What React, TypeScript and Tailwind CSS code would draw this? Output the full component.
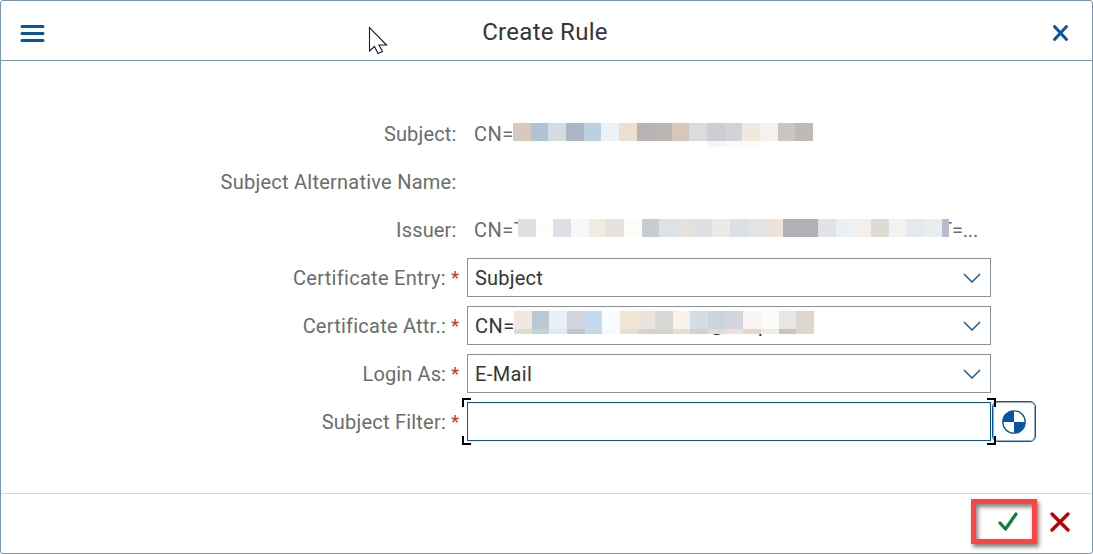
import React from "react";

const subjectTiles = ["#d8c8be", "#b1c2d3", "#d5dbe3", "#acb6c5", "#bdd0e2", "#edf2f4", "#ecdfd1", "#bab3b3", "#bab6b2", "#d5c7bc", "#dcdcdf", "#cecdd3", "#d0d4d9", "#f2e9de", "#f4f1ee", "#ccc4bf", "#c1b8b1"];
const subjectTail = ["#f5f5f3", "#f8fafc", "#fefaf7"];
const issuerTiles = ["#e2dee4", "#fefefc", "#e0dde6", "#f5f7fa", "#eeece1", "#e6e1dc", "#fdfdf8", "#c8cbd1", "#dee1e8", "#e7e1de", "#dfe0e1", "#ebeae6", "#dbe0e4", "#e3e3e3", "#eee3da", "#b0b1b5", "#b0b1b5", "#e1e2e5", "#ebf0f2", "#f3f0eb", "#dfdad4", "#f0f3f2", "#e7e8ef", "#e8edf0", "#b9bbd5"];
const attrTiles = ["#f2e8df", "#b8c8d5", "#e8f0f8", "#d0d4dd", "#c3daf0", "#f8fcff", "#f1e6d6", "#ebe3dd", "#d7d7d4", "#f9f1ea", "#d2dee3", "#cad4df", "#d4d5dc", "#f7f4f1", "#fafaf6", "#e6e6e5", "#dfd5cf"];
const attrTail = ["#dedbd2", "#c8d2d7", "#deebf5", "#bfc8d2", "#c9d6e6", "#f8faff", "#e6ddd5", "#d8d2cc", "#d4d4d0", "#e5ded7", "#d6d0cb", "#e0dcda", "#e9e3de", "#e5d5ca", "#eeece8", "#ccc3bc", "#dfd5cf"];

function Tiles({ colors, cls }: { colors: string[]; cls: string }) {
  return (
    <svg className={cls} viewBox={`0 0 ${colors.length * 17.647} 18`} preserveAspectRatio="xMinYMin slice" shapeRendering="crispEdges" aria-hidden="true">
      {colors.map((c, i) => (
        <rect key={i} x={Math.round(i * 17.647)} y="0" width="18" height="18" fill={c} />
      ))}
    </svg>
  );
}

function Label({ text, required, cls = "" }: { text: string; required?: boolean; cls?: string }) {
  return (
    <div className="flex w-[460px] shrink-0 justify-end pt-px text-[#6a6d70]">
      <span className={cls}>{text}</span>
      {required ? <span className="ml-[5px] w-[10px] text-[19px] text-[#d0302b]">*</span> : <span className="w-[4.5px]" />}
    </div>
  );
}

function Select({ children }: { children: React.ReactNode }) {
  return (
    <div className="relative ml-[6px] flex h-[39px] w-[524px] items-center border border-[#89919a] pl-[7px] text-[#32363a]">
      {children}
      <svg className="ml-auto mr-[9px]" width="18" height="12" viewBox="0 0 18 12" fill="none" stroke="#0854a0" strokeWidth="1.4">
        <path d="M1 2 9 10 17 2" />
      </svg>
    </div>
  );
}

export default function App() {
  return (
    <div className="relative flex h-[554px] w-[1093px] flex-col overflow-hidden rounded-[3px] border border-[#7996b4] bg-white font-['Roboto','Noto_Sans',sans-serif] text-[20px] leading-[24px]">
      <header className="flex h-[60px] shrink-0 items-center justify-between border-b border-[#7996b4] px-[19px]">
        <button aria-label="Menu" className="mt-[5px]">
          <svg width="26" height="20" viewBox="0 0 26 20" stroke="#0854a0" strokeWidth="3" strokeLinecap="round">
            <path d="M2 3.5H23M2 10.5H23M2 17.5H23" />
          </svg>
        </button>
        <h1 className="-ml-[8px] mt-[2px] text-[24px] tracking-[0.3px] text-[#32363a]">Create Rule</h1>
        <button aria-label="Close" className="mr-[3px] mt-[5px]">
          <svg width="18" height="18" viewBox="0 0 18 18" stroke="#0854a0" strokeWidth="3" strokeLinecap="round">
            <path d="M2.5 2.5 14.5 15.5M14.5 2.5 2.5 15.5" />
          </svg>
        </button>
      </header>

      <svg className="absolute left-[367px] top-[25px]" width="22" height="30" viewBox="0 0 22 30" fill="white" stroke="#1c1a2a" strokeWidth="1.1">
        <path d="M1.5 1.5V25L6.5 20.5 10 27.5 14.5 25.5 11 19H18.5Z" />
      </svg>

      <main className="flex flex-1 flex-col gap-[9px] pt-[53px]">
        <div className="flex h-[39px] items-center">
          <Label text="Subject:" cls="tracking-[0.15px]" />
          <div className="relative ml-[13px] flex pt-px tracking-[0.5px] text-[#6a6d70]">
            CN=
            <Tiles colors={subjectTiles} cls="absolute left-[39px] top-[2px] h-[18px] w-[300px]" />
            <Tiles colors={subjectTail} cls="absolute left-[233px] top-[20px] h-[6px] w-[53px]" />
          </div>
        </div>
        <div className="flex h-[39px] items-center">
          <Label text="Subject Alternative Name:" cls="tracking-[0.24px]" />
        </div>
        <div className="flex h-[39px] items-center">
          <Label text="Issuer:" cls="tracking-[0.15px]" />
          <div className="relative ml-[13px] flex w-[504px] justify-between pt-px text-[#6a6d70]">
            <span className="tracking-[0.5px]">CN=T</span>
            <span className="-tracking-[0.2px]">T=...</span>
            <Tiles colors={issuerTiles} cls="absolute left-[44px] top-[2px] h-[18px] w-[431px]" />
          </div>
        </div>
        <div className="flex h-[39px] items-center">
          <Label text="Certificate Entry:" required cls="tracking-[0.29px]" />
          <Select><span className="tracking-[0.2px]">Subject</span></Select>
        </div>
        <div className="flex h-[39px] items-center">
          <Label text="Certificate Attr.:" required cls="tracking-[0.23px]" />
          <Select>
            <span className="tracking-[0.5px]">CN=</span>
            <span className="absolute left-[241px] top-[6px] text-[18px]">@</span>
            <span className="absolute left-[290px] top-[6px]">p</span>
            <Tiles colors={attrTail} cls="absolute left-[46px] top-[9px] h-[18px] w-[300px]" />
            <Tiles colors={attrTiles} cls="absolute left-[46px] top-[4px] h-[18px] w-[300px]" />
          </Select>
        </div>
        <div className="flex h-[39px] items-center">
          <Label text="Login As:" required cls="tracking-[0.1px]" />
          <Select><span className="tracking-[0.4px]">E-Mail</span></Select>
        </div>
        <div className="flex h-[39px] items-center">
          <Label text="Subject Filter:" required cls="tracking-[0.22px]" />
          <div className="relative ml-[6px] h-[39px] w-[524px] border border-[#0854a0]">
            <input aria-label="Subject Filter" className="block h-full w-full px-2 outline-none" />
            <span className="absolute -left-[6px] -top-[5px] z-10 size-[9px] border-l-2 border-t-2 border-black" />
            <span className="absolute -right-[6px] -top-[5px] z-10 size-[9px] border-r-2 border-t-2 border-black" />
            <span className="absolute -bottom-[5px] -left-[6px] z-10 size-[9px] border-b-2 border-l-2 border-black" />
            <span className="absolute -bottom-[5px] -right-[6px] z-10 size-[9px] border-b-2 border-r-2 border-black" />
          </div>
          <button aria-label="Define filter" className="ml-px flex h-[41px] w-[44px] items-center justify-center rounded-[6px] border border-[#0854a0] shadow-[inset_0_0_0_1px_rgba(8,84,160,0.45)]">
            <svg width="26" height="26" viewBox="0 0 26 26">
              <circle cx="13" cy="13" r="11.2" fill="white" stroke="#0854a0" strokeWidth="1.3" />
              <path d="M13 13V2A11 11 0 0 0 2 13ZM13 13V24A11 11 0 0 0 24 13Z" fill="#0854a0" />
            </svg>
          </button>
        </div>
      </main>

      <footer className="flex h-[60px] shrink-0 items-start justify-end border-t border-[#d9d9d9] pr-[22px] pt-[5px]">
        <button aria-label="Confirm" className="flex h-[45px] w-[66px] items-center justify-center border-[5px] border-[#ff4242] pl-[7px] shadow-[2px_3px_4px_rgba(0,0,0,0.5),inset_2px_3px_4px_rgba(0,0,0,0.5)]">
          <svg width="22" height="20" viewBox="0 0 22 20" fill="none" stroke="#107e3e" strokeWidth="3.2" strokeLinecap="round" strokeLinejoin="round">
            <path d="M3 11 8.5 17 19 2" />
          </svg>
        </button>
        <button aria-label="Cancel" className="ml-[13px] mt-[13px]">
          <svg width="20" height="20" viewBox="0 0 20 20" stroke="#bb0000" strokeWidth="3.3" strokeLinecap="round">
            <path d="M2 2 18 18M18 2 2 18" />
          </svg>
        </button>
      </footer>
    </div>
  );
}
